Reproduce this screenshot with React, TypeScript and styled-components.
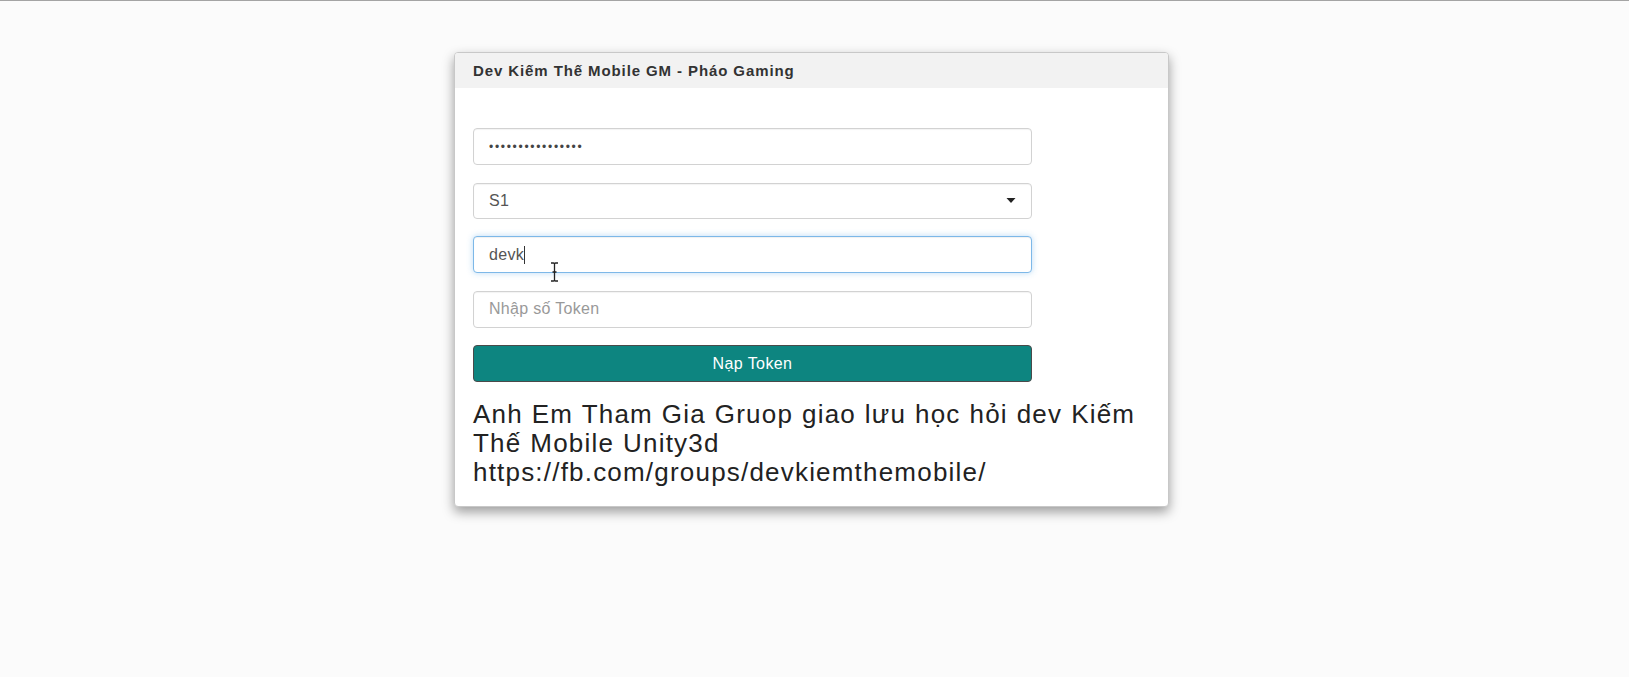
import styled, { createGlobalStyle } from 'styled-components';

const GlobalStyle = createGlobalStyle`
  html, body {
    margin: 0;
    padding: 0;
    background: #fbfbfb;
  }
  body {
    border-top: 1px solid #a4a4a4;
    font-family: 'Liberation Sans', Arial, sans-serif;
    color: #333;
  }
  * {
    box-sizing: border-box;
  }
`;

const App = () => {
  return (
    <>
      <GlobalStyle />
      <Page>
        <Card>
          <CardHeader>Dev Kiếm Thế Mobile GM - Pháo Gaming</CardHeader>
          <CardBody>
            <Form>
              <Field type="password" value="1234567890123456" readOnly />
              <SelectWrap>
                <Select value="S1" onChange={() => {}}>
                  <option value="S1">S1</option>
                  <option value="S2">S2</option>
                </Select>
                <Caret viewBox="0 0 10 6">
                  <path d="M0.5 0 L9.5 0 L5 5 Z" fill="#222" />
                </Caret>
              </SelectWrap>
              <FieldWrap>
                <Field value="devk" $focused readOnly />
                <TextCaret />
                <IBeam viewBox="0 0 9 20">
                  <path
                    d="M1 1 H3.5 Q4.5 1 4.5 2 V18 Q4.5 19 3.5 19 H1 M8 1 H5.5 Q4.5 1 4.5 2 M4.5 18 Q4.5 19 5.5 19 H8 M2.5 10 H6.5"
                    stroke="#222"
                    strokeWidth="1.3"
                    fill="none"
                  />
                </IBeam>
              </FieldWrap>
              <Field placeholder="Nhập số Token" />
              <SubmitButton type="button">Nạp Token</SubmitButton>
            </Form>
            <Notice>
              Anh Em Tham Gia Gruop giao lưu học hỏi dev Kiếm Thế Mobile Unity3d
              <br />
              https://fb.com/groups/devkiemthemobile/
            </Notice>
          </CardBody>
        </Card>
      </Page>
    </>
  );
};

export default App;

const Page = styled.div`
  display: flex;
  justify-content: center;
  padding: 51px 6px 0 0;
  min-height: 676px;
`;

const Card = styled.div`
  width: 715px;
  align-self: flex-start;
  background: #fff;
  border: 1px solid #c8c8c8;
  border-radius: 4px;
  box-shadow: 0 5px 12px rgba(0, 0, 0, 0.38);
  overflow: hidden;
`;

const CardHeader = styled.div`
  height: 35px;
  padding: 0 18px;
  display: flex;
  align-items: center;
  background: #f2f2f2;
  font-size: 15px;
  font-weight: 700;
  letter-spacing: 0.9px;
  color: #333;
`;

const CardBody = styled.div`
  padding: 40px 18px 19px 18px;
`;

const Form = styled.div`
  width: 559px;
  display: flex;
  flex-direction: column;
  gap: 17.5px;
`;

const Field = styled.input<{ $focused?: boolean }>`
  width: 100%;
  height: 37px;
  padding: 0 15px;
  font-family: 'Liberation Sans', Arial, sans-serif;
  font-size: 16px;
  letter-spacing: 0.3px;
  color: #555;
  background: #fff;
  border: 1px solid ${(p) => (p.$focused ? '#7db8e8' : '#d2d2d2')};
  border-radius: 4px;
  outline: none;
  box-shadow: ${(p) =>
    p.$focused
      ? 'inset 0 1px 1px rgba(0,0,0,.06), 0 0 6px rgba(102,175,233,.45)'
      : 'inset 0 1px 1px rgba(0,0,0,.05)'};

  &[type='password'] {
    font-size: 12px;
    letter-spacing: 1.7px;
    color: #444;
  }

  &::placeholder {
    color: #999;
  }
`;

const FieldWrap = styled.div`
  position: relative;
`;

const TextCaret = styled.span`
  position: absolute;
  left: 51px;
  top: 10px;
  width: 1px;
  height: 18px;
  background: #333;
`;

const IBeam = styled.svg`
  position: absolute;
  left: 77px;
  top: 26px;
  width: 9px;
  height: 20px;
`;

const SelectWrap = styled.div`
  position: relative;
`;

const Select = styled.select`
  width: 100%;
  height: 36px;
  padding: 0 15px;
  font-family: 'Liberation Sans', Arial, sans-serif;
  font-size: 16px;
  letter-spacing: 0.3px;
  color: #555;
  background: #fff;
  border: 1px solid #d2d2d2;
  border-radius: 4px;
  appearance: none;
  outline: none;
  box-shadow: inset 0 1px 1px rgba(0, 0, 0, 0.05);
`;

const Caret = styled.svg`
  position: absolute;
  right: 16px;
  top: 15px;
  width: 10px;
  height: 6px;
  pointer-events: none;
`;

const SubmitButton = styled.button`
  height: 37px;
  width: 100%;
  background: #0d8580;
  color: #fff;
  border: 1px solid #4a4a4a;
  border-radius: 4px;
  font-family: 'Liberation Sans', Arial, sans-serif;
  font-size: 16px;
  letter-spacing: 0.4px;
  cursor: pointer;
`;

const Notice = styled.div`
  margin-top: 18px;
  font-size: 26px;
  line-height: 29px;
  letter-spacing: 1.2px;
  word-spacing: 0.5px;
  color: #222;
`;
